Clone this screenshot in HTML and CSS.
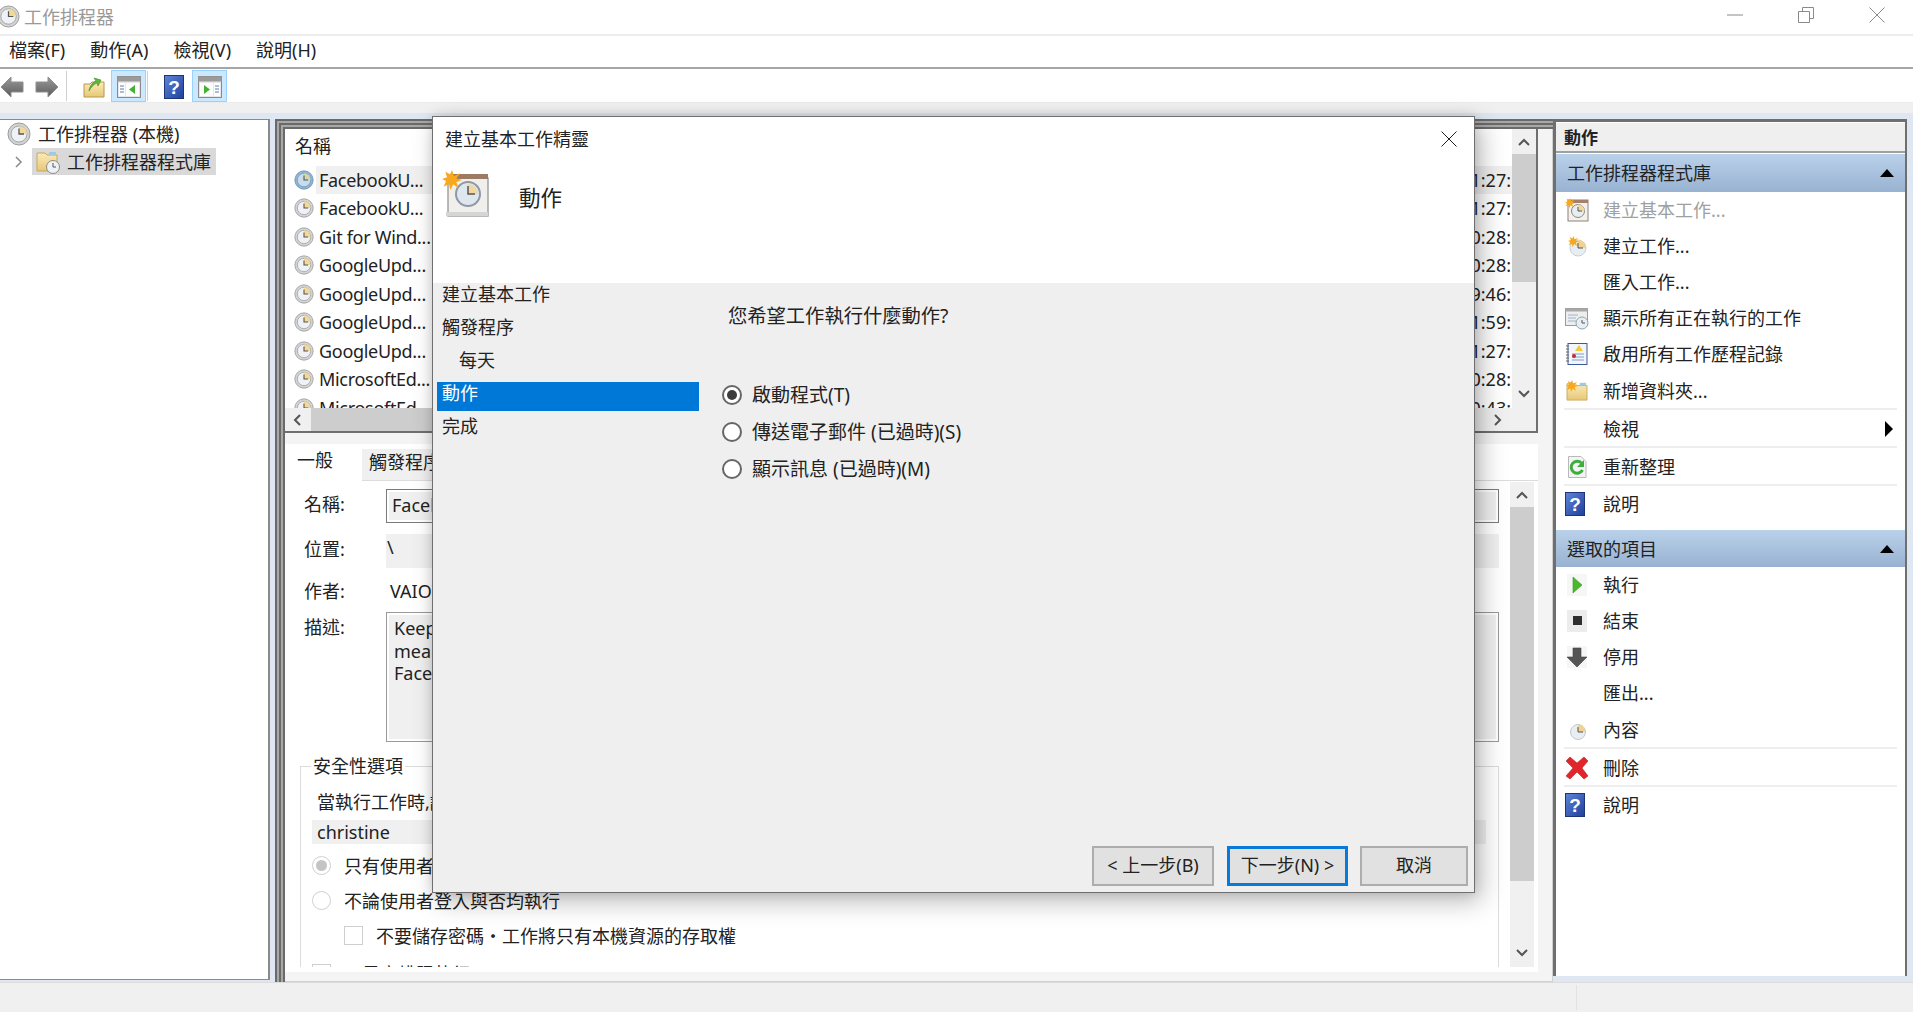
FILE: index.html
```html
<!DOCTYPE html>
<html lang="zh-Hant">
<head>
<meta charset="utf-8">
<title>工作排程器</title>
<link rel="stylesheet" href="styles.css">
</head>
<body>
<svg class="defs" aria-hidden="true">
  <defs>
    <linearGradient id="gHelp" x1="0" y1="0" x2="1" y2="1"><stop offset="0" stop-color="#5f86d8"/><stop offset="1" stop-color="#1d3f9c"/></linearGradient>
    <linearGradient id="gFolder" x1="0" y1="0" x2="0" y2="1"><stop offset="0" stop-color="#fbeab8"/><stop offset="1" stop-color="#e8c877"/></linearGradient>
    <linearGradient id="gArrow" x1="0" y1="0" x2="0" y2="1"><stop offset="0" stop-color="#9a9a9a"/><stop offset="1" stop-color="#5c5c5c"/></linearGradient>
    <symbol id="clock" viewBox="0 0 24 24"><circle cx="12" cy="12" r="11" fill="#d4d4d4" stroke="#9c9c9c"/><circle cx="12" cy="12" r="8" fill="#eef2f6" stroke="#8a8a8a" stroke-width=".7"/><path d="M12 4a8 8 0 0 1 8 8h-8z" fill="#f3d998"/><path d="M12 6.500V12h5" fill="none" stroke="#555" stroke-width="1.300"/></symbol>
    <symbol id="clockblue" viewBox="0 0 24 24"><circle cx="12" cy="12" r="11" fill="#8fb3d3" stroke="#6b95bb"/><circle cx="12" cy="12" r="8" fill="#c9dcec" stroke="#6b8bab" stroke-width=".7"/><path d="M12 4a8 8 0 0 1 8 8h-8z" fill="#d5d8a8"/><path d="M12 6.500V12h5" fill="none" stroke="#44576a" stroke-width="1.300"/></symbol>
    <symbol id="help" viewBox="0 0 20 24"><rect x=".5" y=".5" width="19" height="23" fill="url(#gHelp)" stroke="#1c3479"/><text x="10" y="19" text-anchor="middle" class="helpq">?</text></symbol>
    <symbol id="star" viewBox="0 0 12 12"><path d="M6 0l1.200 3.600L11 2 8.600 5l3.400 1-3.400 1.200L10 11 6.800 8.600 5 12 4.200 8.400 1 10l1.400-3.400L0 5.400l3-1L2 1l2.800 1.600z" fill="#f7a81c"/></symbol>
    <symbol id="tfold" viewBox="0 0 24 22"><path d="M1 21V3h9l2 2h11v16z" fill="url(#gFolder)" stroke="#c9a85c"/><rect x="15" y="2" width="7" height="3" fill="#9ccbe8"/></symbol>
  </defs>
</svg>

<header class="titlebar">
  <svg class="title-icon"><use href="#clock"/></svg>
  <span class="title-text">工作排程器</span>
  <div class="win-controls">
    <svg class="win-btn" viewBox="0 0 16 16"><path d="M0 8h16" stroke="#8a8a8a"/></svg>
    <svg class="win-btn" viewBox="0 0 16 16"><path d="M.5 4.500h11v11H.5zM4.500 4V.5h11v11H12" fill="none" stroke="#8a8a8a"/></svg>
    <svg class="win-btn" viewBox="0 0 16 16"><path d="M.5.5l15 15M15.500.5l-15 15" stroke="#8a8a8a"/></svg>
  </div>
</header>

<nav class="menubar">
  <span>檔案(F)</span><span>動作(A)</span><span>檢視(V)</span><span>說明(H)</span>
</nav>

<div class="toolbar">
  <svg class="tb-arrow" viewBox="0 0 24 22"><path d="M1 11L11 1v5h12v10H11v5z" fill="url(#gArrow)" stroke="#8e8e8e"/></svg>
  <svg class="tb-arrow tb-arrow-fwd" viewBox="0 0 24 22"><path d="M23 11L13 1v5H1v10h12v5z" fill="url(#gArrow)" stroke="#8e8e8e"/></svg>
  <i class="tb-sep"></i>
  <svg class="tb-folder" viewBox="0 0 22 22"><path d="M1 21V8h6l2-2h12v15z" fill="url(#gFolder)" stroke="#b8984c"/><path d="M6 15c1-6 4-9 7-10l-2-3 7 2-3 6-1-3c-3 1-6 4-8 8z" fill="#5fb83c" stroke="#3d8a22" stroke-width=".6"/></svg>
  <span class="tb-toggle">
    <svg class="tb-pane" viewBox="0 0 24 22"><rect x=".5" y=".5" width="23" height="21" fill="#e7e7e7" stroke="#8a8a8a"/><rect x=".5" y=".5" width="23" height="5" fill="#9a9a9a"/><rect x="2" y="7" width="6" height="13" fill="#fff"/><path d="M3 10h4M3 13h4M3 16h4" stroke="#5a7fb0"/><rect x="9" y="7" width="13" height="13" fill="#fff"/><path d="M18 9v9l-6-4.500z" fill="#3fb52e"/></svg>
  </span>
  <i class="tb-sep tb-sep-tight"></i>
  <svg class="tb-help"><use href="#help"/></svg>
  <span class="tb-toggle tb-toggle-b">
    <svg class="tb-pane" viewBox="0 0 24 22"><rect x=".5" y=".5" width="23" height="21" fill="#e7e7e7" stroke="#8a8a8a"/><rect x=".5" y=".5" width="23" height="5" fill="#9a9a9a"/><rect x="2" y="7" width="13" height="13" fill="#fff"/><rect x="16" y="7" width="6" height="13" fill="#fff"/><path d="M17 10h4M17 13h4M17 16h4" stroke="#5a7fb0"/><path d="M6 9v9l6-4.500z" fill="#3fb52e"/></svg>
  </span>
</div>
<div class="toolbar-gap"></div>

<main class="workspace">
  <aside class="tree">
    <div class="tree-root">
      <svg class="tree-clock"><use href="#clock"/></svg>
      <span>工作排程器 (本機)</span>
    </div>
    <div class="tree-child">
      <svg class="tree-chev" viewBox="0 0 8 12"><path d="M1 1l5 5-5 5" fill="none" stroke="#8a8a8a" stroke-width="1.500"/></svg>
      <div class="tree-sel">
        <svg class="tree-folder" viewBox="0 0 24 24"><path d="M1 21V3h8l2 2h10v16z" fill="url(#gFolder)" stroke="#c9a85c"/><rect x="13" y="2" width="7" height="3" fill="#9ccbe8"/><circle cx="17" cy="17" r="6.500" fill="#eef2f6" stroke="#8a8a8a"/><path d="M17 13v4h3" fill="none" stroke="#555"/></svg>
        <span>工作排程器程式庫</span>
      </div>
    </div>
  </aside>

  <section class="center">
    <div class="listpane">
      <div class="listbody">
        <div class="listhead">名稱</div>
        <div class="row row-sel"><svg class="row-icon"><use href="#clockblue"/></svg><span class="row-name">FacebookU...</span><span class="row-time">上午 11:27:</span></div>
        <div class="row"><svg class="row-icon"><use href="#clock"/></svg><span class="row-name">FacebookU...</span><span class="row-time">上午 11:27:</span></div>
        <div class="row"><svg class="row-icon"><use href="#clock"/></svg><span class="row-name">Git for Wind...</span><span class="row-time">上午 10:28:</span></div>
        <div class="row"><svg class="row-icon"><use href="#clock"/></svg><span class="row-name">GoogleUpd...</span><span class="row-time">上午 10:28:</span></div>
        <div class="row"><svg class="row-icon"><use href="#clock"/></svg><span class="row-name">GoogleUpd...</span><span class="row-time">上午 9:46:</span></div>
        <div class="row"><svg class="row-icon"><use href="#clock"/></svg><span class="row-name">GoogleUpd...</span><span class="row-time">上午 11:59:</span></div>
        <div class="row"><svg class="row-icon"><use href="#clock"/></svg><span class="row-name">GoogleUpd...</span><span class="row-time">上午 11:27:</span></div>
        <div class="row"><svg class="row-icon"><use href="#clock"/></svg><span class="row-name">MicrosoftEd...</span><span class="row-time">上午 10:28:</span></div>
        <div class="row"><svg class="row-icon"><use href="#clock"/></svg><span class="row-name">MicrosoftEd...</span><span class="row-time">上午 10:43:</span></div>
      </div>
      <div class="vscroll">
        <svg class="chev" viewBox="0 0 12 8"><path d="M1 7l5-5 5 5" fill="none" stroke="#555" stroke-width="2"/></svg>
        <div class="thumb thumb-list"></div>
        <svg class="chev chev-end" viewBox="0 0 12 8"><path d="M1 1l5 5 5-5" fill="none" stroke="#555" stroke-width="2"/></svg>
      </div>
      <div class="hscroll">
        <svg class="hchev" viewBox="0 0 8 12"><path d="M7 1L2 6l5 5" fill="none" stroke="#555" stroke-width="2"/></svg>
        <div class="hthumb"></div>
        <svg class="hchev" viewBox="0 0 8 12"><path d="M1 1l5 5-5 5" fill="none" stroke="#555" stroke-width="2"/></svg>
      </div>
      <div class="corner"></div>
    </div>

    <div class="detailpane">
      <div class="tabs">
        <span class="tab tab-on">一般</span>
        <span class="tab">觸發程序</span>
      </div>
      <div class="detailbody">
        <div class="form">
          <div class="field"><span class="flabel">名稱:</span><div class="fvalue input">FacebookUpdateTaskMachineCore</div></div>
          <div class="field field-loc"><span class="flabel">位置:</span><div class="fvalue readonly">\</div></div>
          <div class="field field-author"><span class="flabel">作者:</span><div class="fvalue plain">VAIO\christine</div></div>
          <div class="field field-desc"><span class="flabel">描述:</span><div class="fvalue desc">Keeps your Facebook software up to date.<br>meaning security issues may not be fixed.<br>Facebook software using it.</div></div>
          <div class="group">
            <span class="legend">安全性選項</span>
            <div class="g-heading">當執行工作時,請使用下列使用者帳戶:</div>
            <div class="g-user">christine</div>
            <div class="g-opt"><span class="g-radio g-radio-on"></span><span>只有使用者登入時才執行</span></div>
            <div class="g-opt"><span class="g-radio"></span><span>不論使用者登入與否均執行</span></div>
            <div class="g-opt g-opt-sub"><span class="g-check"></span><span>不要儲存密碼・工作將只有本機資源的存取權</span></div>
            <div class="g-opt g-opt-last"><span class="g-check"></span><span>以最高權限執行</span></div>
          </div>
        </div>
        <div class="vscroll vscroll-detail">
          <svg class="chev" viewBox="0 0 12 8"><path d="M1 7l5-5 5 5" fill="none" stroke="#555" stroke-width="2"/></svg>
          <div class="thumb thumb-detail"></div>
          <svg class="chev chev-end" viewBox="0 0 12 8"><path d="M1 1l5 5 5-5" fill="none" stroke="#555" stroke-width="2"/></svg>
        </div>
      </div>
    </div>
  </section>

  <aside class="actions">
    <div class="act-title">動作</div>
    <div class="act-group"><span>工作排程器程式庫</span><i class="tri-up"></i></div>
    <div class="act disabled"><svg class="act-icon" viewBox="0 0 24 24"><rect x="3" y="2" width="20" height="21" fill="#f4f1ec" stroke="#8d8277"/><rect x="3" y="2" width="20" height="3" fill="#a5806a"/><circle cx="13" cy="13" r="6.500" fill="#e6edf3" stroke="#888"/><path d="M13 6.500a6.500 6.500 0 0 1 6.500 6.500H13z" fill="#f1d7a0"/><path d="M13 9v4h4" fill="none" stroke="#555"/><use href="#star" x="0" y="0" width="10" height="10"/></svg><span>建立基本工作...</span></div>
    <div class="act"><svg class="act-icon" viewBox="0 0 24 24"><circle cx="13" cy="14" r="8" fill="#e6edf3" stroke="#c9cfd6"/><path d="M13 6a8 8 0 0 1 8 8h-8z" fill="#f1d28e"/><path d="M13 9v5h5" fill="none" stroke="#555"/><use href="#star" x="3" y="2" width="11" height="11"/></svg><span>建立工作...</span></div>
    <div class="act"><span class="act-blank"></span><span>匯入工作...</span></div>
    <div class="act"><svg class="act-icon" viewBox="0 0 24 24"><rect x=".5" y="2.500" width="22" height="17" fill="#eeeeee" stroke="#9a9a9a"/><rect x=".5" y="2.500" width="22" height="3" fill="#a8a8a8"/><path d="M3 9h10M3 12h8M3 15h8" stroke="#9fb4cc"/><circle cx="17" cy="17" r="6" fill="#e8eef4" stroke="#8aa"/><path d="M17 14v3h3" fill="none" stroke="#555"/></svg><span>顯示所有正在執行的工作</span></div>
    <div class="act"><svg class="act-icon" viewBox="0 0 24 24"><rect x="3" y="1.500" width="19" height="21" fill="#f2f6fb" stroke="#3a5a9c"/><path d="M7 12h12M7 15h12M7 18h12" stroke="#7e9cc8"/><path d="M1 4h3M1 7h3M1 10h3M1 13h3M1 16h3M1 19h3" stroke="#666"/><path d="M14 3l4 6h-8z" fill="#f2c83c"/><circle cx="9" cy="14" r="2" fill="#c8282c"/></svg><span>啟用所有工作歷程記錄</span></div>
    <div class="act sep"><svg class="act-icon" viewBox="0 0 24 24"><use href="#tfold" x="1" y="2" width="22" height="20"/><use href="#star" x="1" y="1" width="12" height="12"/></svg><span>新增資料夾...</span></div>
    <div class="act sep"><span class="act-blank"></span><span>檢視</span><i class="tri-right"></i></div>
    <div class="act sep"><svg class="act-icon" viewBox="0 0 24 24"><path d="M3.500 1.500H16l5 5v16H3.500z" fill="#f4f4f4" stroke="#b8b8b8"/><path d="M17.500 15a6 6 0 1 1-1-7" fill="none" stroke="#3dae3d" stroke-width="3"/><path d="M19 5v7h-7z" fill="#3dae3d"/></svg><span>重新整理</span></div>
    <div class="act"><svg class="act-icon act-icon-help"><use href="#help"/></svg><span>說明</span></div>

    <div class="act-group act-group-b"><span>選取的項目</span><i class="tri-up"></i></div>
    <div class="act"><svg class="act-icon" viewBox="0 0 24 24"><rect x="2" y="1" width="20" height="22" fill="#f6f6f6"/><path d="M8 4l9 8-9 8z" fill="#49b82c" stroke="#3a9c22" stroke-width=".6"/></svg><span>執行</span></div>
    <div class="act"><svg class="act-icon" viewBox="0 0 24 24"><rect x="2" y="1" width="20" height="22" fill="#ececec"/><rect x="8" y="7" width="9" height="9" fill="#2f2f2f"/></svg><span>結束</span></div>
    <div class="act"><svg class="act-icon" viewBox="0 0 24 24"><rect x="2" y="1" width="20" height="22" fill="#f6f6f6"/><path d="M8 3h8v9h6l-10 10L2 12h6z" fill="#555" stroke="#444" stroke-width=".6"/></svg><span>停用</span></div>
    <div class="act"><span class="act-blank"></span><span>匯出...</span></div>
    <div class="act sep"><svg class="act-icon" viewBox="0 0 24 24"><circle cx="13" cy="14" r="7.500" fill="#e8eef4" stroke="#c2c8cf"/><path d="M13 6.500a7.500 7.500 0 0 1 7.500 7.500H13z" fill="#f1d28e"/><path d="M13 9v5h5" fill="none" stroke="#555"/></svg><span>內容</span></div>
    <div class="act sep"><svg class="act-icon act-icon-x" viewBox="0 0 24 24"><path d="M1 5l4-4 7 6 7-6 4 4-6 7 6 8-4 3-7-7-7 7-4-3 7-8z" fill="#e2242b" stroke="#b5272c" stroke-width=".6"/></svg><span>刪除</span></div>
    <div class="act"><svg class="act-icon act-icon-help"><use href="#help"/></svg><span>說明</span></div>
  </aside>
</main>

<footer class="statusbar"><i class="status-div"></i></footer>

<section class="wizard">
  <div class="wz-title">
    <span>建立基本工作精靈</span>
    <svg class="wz-close" viewBox="0 0 16 16"><path d="M.5.5l15 15M15.500.5l-15 15" stroke="#222"/></svg>
  </div>
  <div class="wz-head">
    <svg class="wz-icon" viewBox="0 0 48 48"><path d="M6 8h40v38H6z" fill="#f1efeb" stroke="#a3a3a3" stroke-width="1.500"/><rect x="6" y="4" width="40" height="5" fill="#9c7a63"/><rect x="4" y="42" width="42" height="4" fill="#d5d5d5"/><circle cx="26" cy="24" r="12" fill="#dfe7ee" stroke="#8d99a5" stroke-width="2"/><path d="M26 14a10 10 0 0 1 10 10H26z" fill="#f1d7a0"/><path d="M26 16v8h7" fill="none" stroke="#555" stroke-width="1.500"/><use href="#star" x="0" y="0" width="20" height="20"/></svg>
    <span class="wz-heading">動作</span>
  </div>
  <div class="wz-body">
    <ul class="wz-nav">
      <li>建立基本工作</li>
      <li>觸發程序</li>
      <li class="wz-indent">每天</li>
      <li class="wz-on">動作</li>
      <li>完成</li>
    </ul>
    <div class="wz-main">
      <p class="wz-q">您希望工作執行什麼動作?</p>
      <div class="wz-opt"><span class="radio radio-on"></span><span>啟動程式(T)</span></div>
      <div class="wz-opt"><span class="radio"></span><span>傳送電子郵件 (已過時)(S)</span></div>
      <div class="wz-opt"><span class="radio"></span><span>顯示訊息 (已過時)(M)</span></div>
    </div>
  </div>
  <div class="wz-foot">
    <button class="btn btn-back">&lt; 上一步(B)</button>
    <button class="btn btn-next">下一步(N) &gt;</button>
    <button class="btn btn-cancel">取消</button>
  </div>
</section>
</body>
</html>
```
FILE: styles.css
```css
* { box-sizing: border-box; }
html, body { margin: 0; height: 100%; }
body {
  display: flex;
  flex-direction: column;
  height: 1012px;
  overflow: hidden;
  background: #f0f0f0;
  color: #222;
  font: 18px/24px "Noto Sans", "Noto Sans CJK TC", sans-serif;
  position: relative;
}
.defs { position: absolute; width: 0; height: 0; }
.helpq { font: bold 19px "Liberation Sans", sans-serif; fill: #fff; }

/* title bar */
.titlebar { height: 36px; flex: none; display: flex; align-items: center; background: #fff; border-bottom: 2px solid #ececec; }
.title-icon { width: 23px; height: 23px; margin-left: -3px; margin-top: -1px; flex: none; }
.title-text { margin-left: 4px; color: #999; }
.win-controls { margin-left: auto; display: flex; gap: 55px; padding-right: 28px; margin-top: -4px; }
.win-btn { width: 16px; height: 16px; }

/* menu */
.menubar { height: 33px; flex: none; display: flex; align-items: center; padding: 0 0 3px 9px; gap: 25px; background: #fff; border-bottom: 2px solid #a6a6a6; }
.menubar span { min-width: 56px; }

/* toolbar */
.toolbar { height: 34px; flex: none; display: flex; align-items: center; padding-top: 1px; background: #fff; border-bottom: 1px solid #ececec; }
.tb-arrow { width: 24px; height: 22px; flex: none; margin: 2px 11px 0 0; }
.tb-arrow-fwd { margin-right: 7px; }
.tb-sep { width: 1px; height: 30px; background: #d0d0d0; flex: none; }
.tb-sep-tight { margin-left: 1px; }
.tb-folder { width: 22px; height: 22px; margin: 2px 0 0 16px; flex: none; }
.tb-toggle { width: 35px; height: 32px; margin-left: 6px; display: flex; align-items: center; justify-content: center; background: #cce8ff; border: 1px solid #99d1ff; flex: none; }
.tb-toggle-b { margin-left: 8px; }
.tb-pane { width: 24px; height: 22px; margin-top: 2px; }
.tb-help { width: 20px; height: 24px; margin: 1px 0 0 16px; flex: none; }
.toolbar-gap { height: 10px; flex: none; background: #f0f0f0; }

/* workspace */
.workspace { flex: 1; min-height: 0; display: flex; background: #dfe8f2; padding-top: 6px; }

.tree { width: 270px; flex: none; background: #fff; border: 1px solid #8a8a8a; border-left: 0; border-right-width: 2px; margin-bottom: 2px; }
.tree-root { height: 28px; display: flex; align-items: center; padding-left: 7px; }
.tree-clock { width: 24px; height: 24px; margin-right: 7px; flex: none; }
.tree-child { display: flex; align-items: center; height: 27px; padding-left: 15px; }
.tree-chev { width: 8px; height: 12px; flex: none; }
.tree-sel { margin-left: 9px; width: 184px; height: 27px; display: flex; align-items: center; background: #d9d9d9; padding-left: 4px; }
.tree-folder { width: 24px; height: 24px; margin-right: 7px; flex: none; }

/* center */
.center {
  width: 1278px;
  flex: none;
  margin-left: 5px;
  padding: 10px 15px 10px 10px;
  background: #f4f4f4;
  box-shadow:
    inset 2px 2px 0 #6a6a6a,
    inset 4px 4px 0 #a8a8a8,
    inset 6px 6px 0 #6a6a6a,
    inset 8px 8px 0 #a8a8a8,
    inset 10px 10px 0 #6a6a6a,
    inset -1px -1px 0 #d0d0d0;
  display: flex;
  flex-direction: column;
}
.listpane {
  height: 304px;
  flex: none;
  background: #fff;
  border-right: 2px solid #6f6f6f;
  border-bottom: 2px solid #6f6f6f;
  display: grid;
  grid-template-columns: 1fr 24px;
  grid-template-rows: 1fr 23px;
}
.listbody { overflow: hidden; min-width: 0; min-height: 0; }
.listhead { height: 36.500px; padding: 5px 0 0 10px; }
.row { height: 28.500px; display: flex; align-items: center; padding-left: 9px; }
.row-icon { width: 20px; height: 20px; flex: none; }
.row-name { margin-left: 5px; letter-spacing: -.3px; }
.row-time { margin-left: auto; padding: 0 1px; }
.row-sel { background: linear-gradient(#f0f0f0, #f0f0f0) no-repeat 31px 0 / 100% 100%; }
.vscroll { background: #f0f0f0; display: flex; flex-direction: column; align-items: center; }
.chev { width: 12px; height: 8px; margin: 9px 0 8px; flex: none; }
.chev-end { margin: auto 0 10px; }
.thumb { background: #cdcdcd; width: 100%; flex: none; }
.thumb-list { height: 128px; }
.hscroll { background: #f0f0f0; display: flex; align-items: center; }
.hchev { width: 8px; height: 12px; margin: 0 10px 0 8px; flex: none; }
.hthumb { background: #cdcdcd; height: 100%; flex: 1; margin-right: 500px; }
.corner { background: #f0f0f0; }

/* detail */
.detailpane { flex: 1; min-height: 0; margin-top: 11px; background: #fff; display: flex; flex-direction: column; }
.tabs { height: 37px; flex: none; display: flex; align-items: flex-end; border-bottom: 1px solid #dcdcdc; }
.tab { height: 31px; padding: 1px 7px 0; background: #f0f0f0; white-space: nowrap; }
.tab-on { background: #fff; width: 77px; height: 36px; margin-bottom: -1px; padding: 3px 0 0 12px; }
.detailbody { flex: 1; min-height: 0; display: flex; padding: 1px 4px 5px 0; }
.form { flex: 1; min-width: 0; overflow: hidden; padding: 7px 11px 0 0; }
.field { display: flex; align-items: center; height: 34px; margin-bottom: 11px; padding-left: 19px; }
.flabel { width: 82px; flex: none; margin-bottom: 5px; }
.fvalue { flex: 1; min-width: 0; height: 34px; padding: 0 5px; white-space: nowrap; overflow: hidden; line-height: 30px; }
.input { border: 1px solid #7a7a7a; box-shadow: inset 0 0 0 2px #fff; background: #f0f0f0; }
.readonly { background: #f0f0f0; line-height: 26px; padding-left: 1px; }
.plain { line-height: 34px; padding-left: 4px; }
.field-loc { margin-bottom: 6px; }
.field-author { margin-bottom: 4px; }
.field-author .flabel { margin-bottom: 0; }
.field-desc { height: 130px; align-items: flex-start; margin-bottom: 0; }
.field-desc .flabel { margin: 3px 0 0; }
.desc { height: 130px; border: 1px solid #9a9a9a; box-shadow: inset 0 0 0 2px #fff; background: #f0f0f0; padding: 4px 7px; line-height: 22.500px; }
.group { margin: 24px 0 0 15px; height: 300px; border: 1px solid #dcdcdc; padding: 0 0 0 11px; }
.legend { display: block; width: fit-content; margin: -13px 0 0 -1px; padding: 0 2px; height: 24px; background: #fff; }
.g-heading { margin: 12px 0 0 5px; height: 24px; }
.g-user { margin: 6px 12px 4px 0; height: 24px; background: #f0f0f0; padding-left: 5px; }
.g-opt { display: flex; align-items: center; gap: 13px; height: 35px; }
.g-opt-sub { padding-left: 32px; }
.g-opt-last { margin-top: 3px; }
.g-radio { width: 19px; height: 19px; border: 1.500px solid #cfcfcf; border-radius: 50%; position: relative; flex: none; }
.g-radio-on::after { content: ""; position: absolute; inset: 3px; border-radius: 50%; background: #c4c4c4; }
.g-check { width: 19px; height: 19px; border: 1.500px solid #cfcfcf; flex: none; }
.vscroll-detail { width: 24px; flex: none; }
.thumb-detail { height: 374px; }

/* actions */
.actions {
  width: 354px;
  flex: none;
  margin-bottom: 6px;
  background: #fff;
  border-left: 3px solid #6f6f6f;
  border-top: 3px solid #6f6f6f;
  border-right: 2px solid #6f6f6f;
}
.act-title { height: 30px; margin-top: 1px; background: #efefef; border-bottom: 2px solid #a0a0a0; padding: 3px 0 0 8px; font-weight: 700; font-size: 17px; }
.act-group { height: 38px; margin-top: 1px; display: flex; align-items: center; justify-content: space-between; padding: 0 11px; background: linear-gradient(#bad1ea, #98b2d1); }
.act-group-b { height: 37px; margin-top: 8px; }
.tri-up { width: 0; height: 0; border: 7px solid transparent; border-top: 0; border-bottom: 8px solid #000; }
.tri-right { width: 0; height: 0; border: 8px solid transparent; border-right: 0; border-left: 8px solid #000; margin-left: auto; margin-right: 4px; }
.act { height: 36px; margin: 0 8px; padding-left: 1px; display: flex; align-items: center; gap: 14px; }
.act.sep { height: 38px; padding-top: 1px; border-bottom: 2px solid #eeeeee; }
.act.disabled { color: #a0a0a0; }
.act-icon { width: 24px; height: 24px; flex: none; }
.act-icon-help { width: 20px; margin-right: 4px; }
.act-blank { width: 24px; flex: none; }

/* status */
.statusbar { height: 30px; flex: none; background: #f0f0f0; border-top: 1px solid #dcdcdc; position: relative; }
.status-div { position: absolute; left: 1576px; top: 2px; bottom: 2px; width: 1px; background: #e2e2e2; }

/* wizard window */
.wizard {
  position: absolute;
  left: 432px;
  top: 116px;
  width: 1043px;
  height: 777px;
  background: #f0f0f0;
  border: 1px solid #6f6f6f;
  box-shadow: 6px 8px 24px rgba(0, 0, 0, .28), 0 0 10px rgba(0, 0, 0, .12);
  display: flex;
  flex-direction: column;
}
.wz-title { height: 44px; flex: none; background: #fff; display: flex; align-items: center; justify-content: space-between; padding: 0 17px 0 12px; }
.wz-close { width: 16px; height: 16px; }
.wz-head { height: 122px; flex: none; background: #fff; display: flex; align-items: flex-start; padding: 9px 0 0 9px; }
.wz-icon { width: 48px; height: 48px; flex: none; }
.wz-heading { margin: 14px 0 0 29px; font-size: 21.500px; line-height: 28px; }
.wz-body { flex: 1; min-height: 0; display: flex; background: #efefef; }
.wz-nav { width: 266px; flex: none; list-style: none; margin: 0; padding: 0 0 0 4px; display: flex; flex-direction: column; gap: 4px; }
.wz-nav li { height: 29px; padding: 0 5px; line-height: 23px; }
.wz-nav .wz-indent { padding-left: 22px; }
.wz-nav .wz-on { background: #0078d7; color: #fff; }
.wz-main { flex: 1; padding: 21px 0 0 23px; font-size: 19px; }
.wz-q { margin: 0 0 48px 6px; font-size: 19.300px; }
.wz-opt { height: 37px; display: flex; align-items: center; gap: 10px; }
.radio { width: 20px; height: 20px; border: 2px solid #666; border-radius: 50%; background: #fff; position: relative; flex: none; }
.radio-on::after { content: ""; position: absolute; inset: 3px; border-radius: 50%; background: #3c3c3c; }
.wz-foot { flex: none; display: flex; justify-content: flex-end; padding: 0 6px 6px 0; background: #efefef; }
.btn { height: 40px; font: inherit; color: #222; background: #e1e1e1; border: 2px solid #adadad; padding: 0 0 2px; }
.btn-back { width: 122px; }
.btn-next { width: 121px; margin-left: 13px; border: 3px solid #0a7ad9; }
.btn-cancel { width: 108px; margin-left: 12px; }
```
